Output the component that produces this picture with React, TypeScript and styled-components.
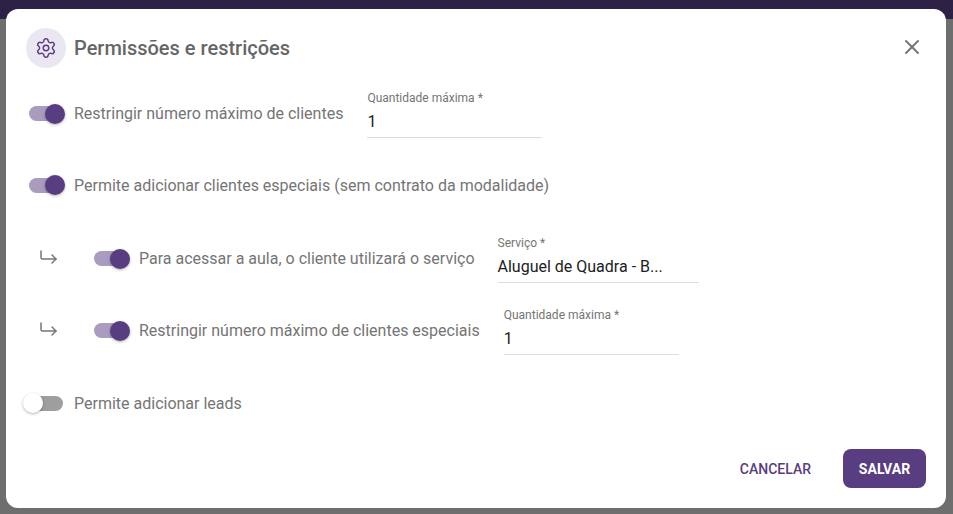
import React from "react";
import styled, { createGlobalStyle } from "styled-components";
import { Settings, X } from "lucide-react";

const GlobalStyle = createGlobalStyle`
  html, body {
    margin: 0;
    padding: 0;
    height: 100%;
    overflow: hidden;
    font-family: Roboto, "Liberation Sans", sans-serif;
  }
`;

const Page = styled.div`
  width: 953px;
  height: 514px;
  background: #6e6e6e;
  display: flex;
  flex-direction: column;
`;

const TopBar = styled.div`
  height: 19px;
  background: #2e2146;
`;

const Overlay = styled.div`
  position: fixed;
  inset: 0;
  padding: 9px 7px 6px 6px;
  box-sizing: border-box;
`;

const Dialog = styled.div`
  height: 100%;
  background: #fff;
  border-radius: 12px;
  box-sizing: border-box;
  padding: 17px 20px 20px 20px;
  display: flex;
  flex-direction: column;
`;

const Header = styled.div`
  display: flex;
  align-items: center;
  height: 44px;
`;

const IconCircle = styled.div`
  width: 40px;
  height: 40px;
  border-radius: 50%;
  background: #ebe7f2;
  color: #583d80;
  display: flex;
  align-items: center;
  justify-content: center;
  margin-right: 8px;
`;

const Title = styled.h2`
  margin: 0;
  flex: 1;
  font-size: 20px;
  font-weight: 500;
  color: #666;
`;

const CloseButton = styled.button`
  border: 0;
  background: none;
  padding: 0;
  margin-right: 2px;
  margin-top: -2px;
  width: 24px;
  height: 24px;
  color: #757575;
`;

const Row = styled.div<{ $height: number; $gap?: number; $indent?: boolean }>`
  display: flex;
  align-items: center;
  height: ${(p) => p.$height}px;
  margin-top: ${(p) => p.$gap ?? 0}px;
  padding-left: ${(p) => (p.$indent ? 10 : 0)}px;
`;

const Arrow = styled.svg`
  width: 24px;
  height: 24px;
  margin-right: 31px;
  margin-top: -6px;
  color: #757575;
  flex: none;
`;

const Switch = styled.span<{ $on: boolean }>`
  position: relative;
  flex: none;
  width: 34px;
  height: 15px;
  margin: 0 11px 0 3px;
  border-radius: 8px;
  background: ${(p) => (p.$on ? "#a99cbf" : "#9e9e9e")};
  &::after {
    content: "";
    position: absolute;
    top: -2.5px;
    left: ${(p) => (p.$on ? 16 : -6)}px;
    width: 20px;
    height: 20px;
    border-radius: 50%;
    background: ${(p) => (p.$on ? "#583d80" : "#fff")};
    box-shadow: 0 1px 3px rgba(0, 0, 0, 0.3);
  }
`;

const Label = styled.span`
  font-size: 16px;
  color: #757575;
  white-space: nowrap;
`;

const Field = styled.div<{ $width: number; $offset: number }>`
  width: ${(p) => p.$width}px;
  margin-left: ${(p) => p.$offset}px;
  border-bottom: 1px solid #ddd;
  height: 49px;
  box-sizing: border-box;
  flex: none;
`;

const FieldLabel = styled.div`
  font-size: 12px;
  line-height: 14px;
  color: #757575;
  margin-top: 2px;
`;

const FieldValue = styled.div`
  font-size: 16px;
  line-height: 20px;
  color: #212121;
  margin-top: 7px;
`;

const Footer = styled.div`
  margin-top: auto;
  display: flex;
  justify-content: flex-end;
  align-items: center;
  gap: 16px;
`;

const TextButton = styled.button`
  border: 0;
  background: none;
  height: 39px;
  padding: 0 16px;
  font: 500 14px Roboto, sans-serif;
  color: #583d80;
`;

const PrimaryButton = styled.button`
  border: 0;
  height: 39px;
  width: 83px;
  border-radius: 8px;
  background: #583d80;
  font: 700 14px Roboto, sans-serif;
  color: #fff;
`;

function SubArrow() {
  return (
    <Arrow viewBox="0 0 24 24" fill="none" stroke="currentColor" strokeWidth="1.5" strokeLinecap="round" strokeLinejoin="round">
      <path d="M5 7v6.5a1.5 1.5 0 0 0 1.5 1.5H20" />
      <path d="M16 11l4 4-4 4" />
    </Arrow>
  );
}

export default function App() {
  return (
    <>
      <GlobalStyle />
      <Page>
        <TopBar />
      </Page>
      <Overlay>
        <Dialog>
          <Header>
            <IconCircle>
              <Settings size={22} strokeWidth={1.6} />
            </IconCircle>
            <Title>Permissões e restrições</Title>
            <CloseButton aria-label="Fechar">
              <X size={24} strokeWidth={2} />
            </CloseButton>
          </Header>
          <Row $height={49} $gap={19}>
            <Switch $on />
            <Label>Restringir número máximo de clientes</Label>
            <Field $width={175} $offset={24}>
              <FieldLabel>Quantidade máxima *</FieldLabel>
              <FieldValue>1</FieldValue>
            </Field>
          </Row>
          <Row $height={24} $gap={35}>
            <Switch $on />
            <Label>Permite adicionar clientes especiais (sem contrato da modalidade)</Label>
          </Row>
          <Row $height={49} $gap={37} $indent>
            <SubArrow />
            <Switch $on />
            <Label>Para acessar a aula, o cliente utilizará o serviço</Label>
            <Field $width={201} $offset={23}>
              <FieldLabel>Serviço *</FieldLabel>
              <FieldValue>Aluguel de Quadra - B...</FieldValue>
            </Field>
          </Row>
          <Row $height={49} $gap={23} $indent>
            <SubArrow />
            <Switch $on />
            <Label>Restringir número máximo de clientes especiais</Label>
            <Field $width={175} $offset={24}>
              <FieldLabel>Quantidade máxima *</FieldLabel>
              <FieldValue>1</FieldValue>
            </Field>
          </Row>
          <Row $height={24} $gap={36}>
            <Switch $on={false} />
            <Label>Permite adicionar leads</Label>
          </Row>
          <Footer>
            <TextButton>CANCELAR</TextButton>
            <PrimaryButton>SALVAR</PrimaryButton>
          </Footer>
        </Dialog>
      </Overlay>
    </>
  );
}
